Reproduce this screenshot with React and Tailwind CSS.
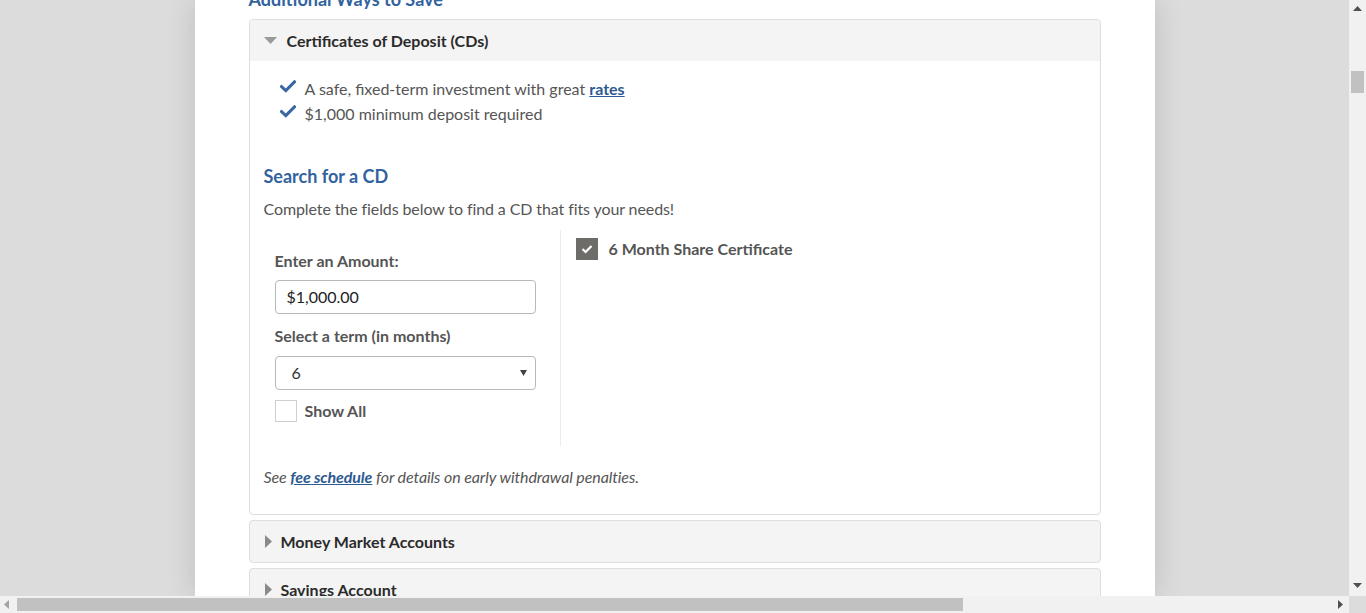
import React from 'react';

const Check = () => (
    <svg width="16" height="13" viewBox="0 0 16 13" className="shrink-0">
        <path d="M1.5 6.5 L5.8 10.6 L14.5 1.8" fill="none" stroke="#3a66a3" strokeWidth="3" strokeLinecap="square" />
    </svg>
);

function ClosedPanel({ title }) {
    return (
        <div className="mt-[5px] border border-[#dedede] rounded-[4px] bg-[#f4f4f4] h-[43px] flex items-center pl-[15px] shrink-0">
            <svg width="7" height="13" viewBox="0 0 7 13" className="mr-[9px]">
                <path d="M0 0 L7 6.5 L0 13 Z" fill="#8a8a8a" />
            </svg>
            <span className="text-[16px] font-bold text-[#2b2b2b]">{title}</span>
        </div>
    );
}

export default function App() {
    return (
        <div className="w-[1366px] h-[613px] overflow-hidden flex flex-col font-['Lato',sans-serif] bg-[#dcdcdc]">
            <div className="flex flex-1 min-h-0">
                {/* Page */}
                <div className="flex-1 flex justify-center overflow-hidden bg-[#dcdcdc]">
                    <div className="w-[960px] bg-white shadow-[0_0_28px_rgba(0,0,0,0.14)] px-[54px] flex flex-col">
                        <h2 className="-mt-[14px] mb-[7px] h-[26px] leading-[26px] text-[18px] font-bold text-[#33639f]">
                            Additional Ways to Save
                        </h2>

                        {/* Open panel */}
                        <div className="border border-[#dedede] rounded-[4px] overflow-hidden shrink-0">
                            <div className="h-[41px] bg-[#f4f4f4] flex items-center pl-[14px]">
                                <svg width="13" height="7" viewBox="0 0 13 7" className="mr-[10px]">
                                    <path d="M0 0 L13 0 L6.5 7 Z" fill="#9a9a9a" />
                                </svg>
                                <span className="text-[16px] font-bold text-[#2b2b2b]">Certificates of Deposit (CDs)</span>
                            </div>
                            <div className="px-[14px] pt-[15px] pb-[25px] text-[16px] text-[#555]">
                                <ul className="pl-[16px]">
                                    <li className="flex items-center gap-[9px] leading-[25px]">
                                        <span className="-mt-[5px]"><Check /></span>
                                        <span>A safe, fixed-term investment with great <a href="#" className="font-bold text-[#2d5a92] underline">rates</a></span>
                                    </li>
                                    <li className="flex items-center gap-[9px] leading-[25px]">
                                        <span className="-mt-[5px]"><Check /></span>
                                        <span>$1,000 minimum deposit required</span>
                                    </li>
                                </ul>

                                <h3 className="mt-[37px] text-[18px] leading-[26px] font-bold text-[#33639f]">Search for a CD</h3>
                                <p className="mt-[8px] leading-[24px] tracking-[-0.1px]">Complete the fields below to find a CD that fits your needs!</p>

                                <div className="mt-[9px] flex">
                                    <div className="w-[297px] border-r border-[#ebebeb] pl-[11px] pr-[24px] pt-[19px] pb-[23px]">
                                        <label className="block leading-[24px] font-bold text-[#555]">Enter an Amount:</label>
                                        <div className="mt-[7px] h-[34px] border border-[#b8b8b8] rounded-[4px] flex items-center pl-[11px] text-[#222]">
                                            $1,000.00
                                        </div>
                                        <label className="block mt-[10px] leading-[24px] font-bold text-[#555]">Select a term (in months)</label>
                                        <div className="mt-[8px] h-[34px] border border-[#b8b8b8] rounded-[4px] flex items-center justify-between pl-[16px] pr-[8px] text-[#333]">
                                            <span>6</span>
                                            <svg width="7" height="6" viewBox="0 0 7 6">
                                                <path d="M0 0 L7 0 L3.5 6 Z" fill="#444" />
                                            </svg>
                                        </div>
                                        <div className="mt-[9px] flex items-center gap-[8px]">
                                            <span className="w-[22px] h-[22px] border border-[#cfcfcf] bg-white" />
                                            <span className="font-bold text-[#555]">Show All</span>
                                        </div>
                                    </div>
                                    <div className="pl-[15px] pt-[7px]">
                                        <div className="flex items-center gap-[11px]">
                                            <span className="w-[22px] h-[22px] bg-[#6e6c69] flex items-center justify-center">
                                                <svg width="12" height="10" viewBox="0 0 12 10">
                                                    <path d="M1.5 5 L4.6 8 L10.5 2" fill="none" stroke="#fff" strokeWidth="2.2" />
                                                </svg>
                                            </span>
                                            <span className="font-bold text-[#555]">6 Month Share Certificate</span>
                                        </div>
                                    </div>
                                </div>

                                <p className="mt-[19px] leading-[24px] italic text-[#555] tracking-[-0.1px]">
                                    See <a href="#" className="font-bold text-[#2d5a92] underline">fee schedule</a> for details on early withdrawal penalties.
                                </p>
                            </div>
                        </div>

                        <ClosedPanel title="Money Market Accounts" />
                        <ClosedPanel title="Savings Account" />
                    </div>
                </div>

                {/* Vertical scrollbar */}
                <div className="w-[17px] bg-[#f1f1f1] flex flex-col items-center">
                    <svg width="9" height="5" viewBox="0 0 9 5" className="mt-[6px]">
                        <path d="M0 5 L9 5 L4.5 0 Z" fill="#505050" />
                    </svg>
                    <div className="mt-[60px] w-[13px] h-[22px] bg-[#c1c1c1]" />
                    <div className="flex-1" />
                    <svg width="9" height="5" viewBox="0 0 9 5" className="mb-[8px]">
                        <path d="M0 0 L9 0 L4.5 5 Z" fill="#505050" />
                    </svg>
                </div>
            </div>

            {/* Horizontal scrollbar */}
            <div className="h-[17px] flex shrink-0">
                <div className="flex-1 bg-[#f1f1f1] flex items-center">
                    <svg width="5" height="9" viewBox="0 0 5 9" className="ml-[4px]">
                        <path d="M5 0 L5 9 L0 4.5 Z" fill="#a3a3a3" />
                    </svg>
                    <div className="ml-[8px] w-[946px] h-[13px] bg-[#c1c1c1]" />
                    <div className="flex-1" />
                    <svg width="5" height="9" viewBox="0 0 5 9" className="mr-[6px]">
                        <path d="M0 0 L0 9 L5 4.5 Z" fill="#505050" />
                    </svg>
                </div>
                <div className="w-[17px] bg-[#dcdcdc]" />
            </div>
        </div>
    );
}
